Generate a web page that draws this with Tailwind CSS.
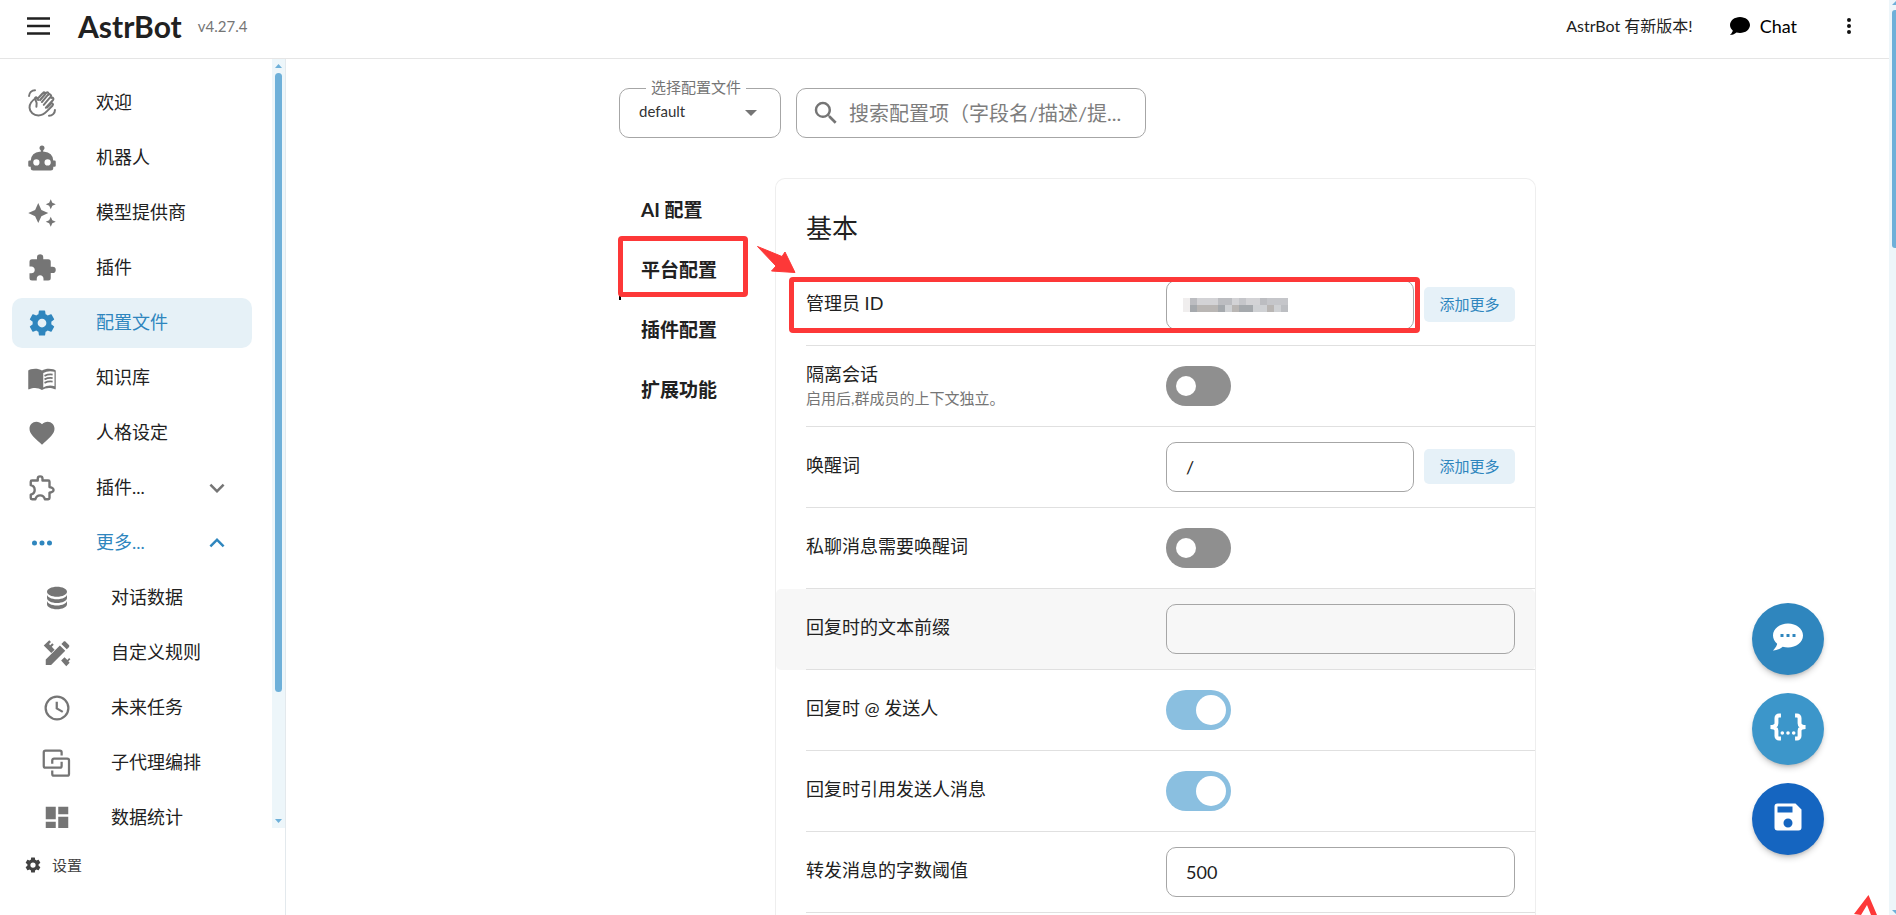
<!DOCTYPE html>
<html lang="zh-CN">
<head>
    <meta charset="UTF-8">
    <meta name="viewport" content="width=device-width, initial-scale=1.0">
    <title>AstrBot</title>
    <script src="https://cdn.jsdelivr.net/npm/@tailwindcss/browser@4"></script>
</head>
<body class="h-screen overflow-hidden bg-white font-['Lato','Noto_Sans_CJK_SC',sans-serif] text-[#212121] flex">
    <!-- icon set -->
    <svg class="hidden">
        <symbol id="i-hand" viewBox="0 0 24 24"><path fill="none" stroke="currentColor" stroke-width="1.700" stroke-linecap="round" stroke-linejoin="round" d="M7.2 15.200l.2-3.200-1.300-3.800c-.3-.9.900-1.500 1.500-.7L8.700 9.500M7.400 7.300c-4 2.600-6.300 5.400-6.100 8.700.2 4 3.600 6.600 7.600 6.700 3.200 0 5.300-1.500 7.400-3.700l4.800-4.900c1-1.200-.4-2.400-1.400-1.500L16.300 16M8.800 7.700l3.600-3.800c1-.9 2.400.3 1.500 1.400l-3.600 4M12.800 3.500c1-1.300 2.700-.2 1.900 1l-4.300 5M14.900 4.200l.8-.9c1.200-1 2.600.3 1.700 1.400l-5.500 6.500M17.600 5c1.200-1.100 2.900.2 1.900 1.600l-6 7M20 7.600c1.300-.7 2.400.7 1.500 1.800L15.300 16M.9 6C1 3.200 3.200 1 6 1M23.100 18c0 2.800-2.300 5-5.100 5"/></symbol>
        <symbol id="i-robot" viewBox="0 0 24 24"><path fill="currentColor" d="M12 2a2 2 0 0 1 2 2c0 .74-.4 1.390-1 1.730V7h1a7 7 0 0 1 7 7h1a1 1 0 0 1 1 1v3a1 1 0 0 1-1 1h-1v1a2 2 0 0 1-2 2H5a2 2 0 0 1-2-2v-1H2a1 1 0 0 1-1-1v-3a1 1 0 0 1 1-1h1a7 7 0 0 1 7-7h1V5.730c-.6-.34-1-.99-1-1.730a2 2 0 0 1 2-2M7.500 13A2.500 2.500 0 0 0 5 15.500 2.500 2.500 0 0 0 7.500 18a2.500 2.500 0 0 0 2.500-2.500A2.500 2.500 0 0 0 7.500 13m9 0a2.500 2.500 0 0 0-2.500 2.500 2.500 2.500 0 0 0 2.500 2.500 2.500 2.500 0 0 0 2.500-2.500 2.500 2.500 0 0 0-2.500-2.500z"/></symbol>
        <symbol id="i-spark" viewBox="0 0 24 24"><path fill="currentColor" d="M9 4l2.500 5.500L17 12l-5.500 2.500L9 20l-2.500-5.500L1 12l5.500-2.500zM19 1l1.250 2.750L23 5l-2.750 1.250L19 9l-1.250-2.750L15 5l2.750-1.250zM19 15l1.250 2.750L23 19l-2.750 1.250L19 23l-1.250-2.750L15 19l2.750-1.250z"/></symbol>
        <symbol id="i-puzzle" viewBox="0 0 24 24"><path fill="currentColor" d="M20.500 11H19V7a2 2 0 0 0-2-2h-4V3.500A2.500 2.500 0 0 0 10.500 1 2.500 2.500 0 0 0 8 3.500V5H4a2 2 0 0 0-2 2v3.800h1.500c1.500 0 2.700 1.200 2.700 2.700S5 16.200 3.500 16.200H2V20a2 2 0 0 0 2 2h3.800v-1.500c0-1.500 1.200-2.700 2.700-2.700s2.700 1.200 2.700 2.700V22H17a2 2 0 0 0 2-2v-4h1.500a2.500 2.500 0 0 0 2.500-2.500 2.500 2.500 0 0 0-2.500-2.500z"/></symbol>
        <symbol id="i-cog" viewBox="0 0 24 24"><path fill="currentColor" d="M12 15.500A3.500 3.500 0 0 1 8.500 12 3.500 3.500 0 0 1 12 8.500a3.500 3.500 0 0 1 3.500 3.500 3.500 3.500 0 0 1-3.500 3.500m7.430-2.530c.04-.32.070-.64.070-.97s-.03-.66-.07-1l2.110-1.630c.19-.15.240-.42.120-.64l-2-3.460c-.12-.22-.39-.31-.61-.22l-2.490 1c-.52-.39-1.060-.73-1.690-.98l-.37-2.650A.506.506 0 0 0 14 2h-4c-.25 0-.46.180-.5.420l-.37 2.650c-.63.250-1.170.590-1.690.980l-2.490-1c-.22-.09-.49 0-.61.220l-2 3.460c-.13.220-.07.490.12.640L4.570 11c-.04.340-.07.670-.07 1s.03.650.070.970l-2.110 1.660c-.19.150-.25.420-.12.640l2 3.460c.12.220.390.300.610.220l2.490-1.010c.52.400 1.060.740 1.690.990l.37 2.650c.04.240.250.420.500.420h4c.25 0 .46-.18.500-.42l.37-2.650c.63-.26 1.170-.59 1.690-.99l2.490 1.010c.22.080.490 0 .61-.22l2-3.460c.12-.22.070-.49-.12-.64z"/></symbol>
        <symbol id="i-book" viewBox="0 0 24 24"><path fill="currentColor" d="M12 21.500c-1.350-.85-3.800-1.500-5.500-1.500-1.650 0-3.350.3-4.750 1.050-.1.050-.15.050-.25.050-.25 0-.5-.25-.5-.5V6c.6-.45 1.250-.75 2-1 1.110-.35 2.330-.5 3.500-.5 1.950 0 4.050.4 5.500 1.500 1.450-1.100 3.550-1.500 5.500-1.500 1.170 0 2.390.15 3.500.5.75.25 1.400.55 2 1v14.600c0 .25-.25.5-.5.5-.1 0-.15 0-.25-.05-1.400-.75-3.100-1.050-4.750-1.050-1.700 0-4.150.65-5.500 1.500M13 8v11.500c1.350-.85 3.800-1.500 5.500-1.500 1.200 0 2.400.15 3.500.5V7c-1.100-.35-2.300-.5-3.500-.5-1.700 0-4.150.65-5.500 1.500z"/><path fill="none" stroke="currentColor" stroke-width="1.400" d="M14 10.300q3.200-1.500 6.500-1M14 13.100q3.200-1.500 6.500-1M14 15.900q3.200-1.500 6.500-1"/></symbol>
        <symbol id="i-heart" viewBox="0 0 24 24"><path fill="currentColor" d="M12 21.350l-1.450-1.320C5.400 15.360 2 12.270 2 8.500 2 5.410 4.420 3 7.500 3c1.740 0 3.410.81 4.500 2.080C13.090 3.810 14.760 3 16.500 3 19.580 3 22 5.410 22 8.500c0 3.770-3.400 6.860-8.550 11.530z"/></symbol>
        <symbol id="i-puzzle-o" viewBox="0 0 24 24"><path fill="none" stroke="currentColor" stroke-width="1.900" stroke-linejoin="round" d="M8.600 6V4.500c0-2.400 3.800-2.400 3.800 0V6H17a1 1 0 0 1 1 1v4.200l1.700.5c2.100.8 2.100 3 0 3.600l-1.700.5V20a1 1 0 0 1-1 1h-2.700c-1-4.200-6.600-4.200-7.600 0H4a1 1 0 0 1-1-1v-2.700c4.200-1 4.200-6.600 0-7.600V7a1 1 0 0 1 1-1z"/></symbol>
        <symbol id="i-dots" viewBox="0 0 24 24"><path fill="currentColor" d="M16 12a2 2 0 0 1 2-2 2 2 0 0 1 2 2 2 2 0 0 1-2 2 2 2 0 0 1-2-2m-6 0a2 2 0 0 1 2-2 2 2 0 0 1 2 2 2 2 0 0 1-2 2 2 2 0 0 1-2-2m-6 0a2 2 0 0 1 2-2 2 2 0 0 1 2 2 2 2 0 0 1-2 2 2 2 0 0 1-2-2z"/></symbol>
        <symbol id="i-db" viewBox="0 0 24 24"><path fill="currentColor" d="M12 3C7.580 3 4 4.790 4 7s3.580 4 8 4 8-1.790 8-4-3.580-4-8-4M4 9v3c0 2.210 3.580 4 8 4s8-1.790 8-4V9c0 2.210-3.580 4-8 4s-8-1.790-8-4m0 5v3c0 2.210 3.580 4 8 4s8-1.790 8-4v-3c0 2.210-3.580 4-8 4s-8-1.790-8-4z"/></symbol>
        <symbol id="i-tools" viewBox="0 0 24 24"><path fill="currentColor" d="M3 21.500v-4.300L14.300 5.900l4.300 4.300L7.300 21.500zM15.500 4.700l1.700-1.700c.5-.5 1.200-.5 1.700 0l2.600 2.600c.5.5.5 1.200 0 1.700l-1.700 1.700zM5.800 1.800l1.400 1.400-1.600 1.600 1 1 1.600-1.600 1.200 1.200-1.600 1.600 2.300 2.300-2.700 2.700-6-6zM15.300 18l2.700-2.700 2.300 2.300 1.400-1.600 1 1-1.600 1.600 1 1.100-2.700 2.800z"/></symbol>
        <symbol id="i-clock" viewBox="0 0 24 24"><path fill="none" stroke="currentColor" stroke-width="1.800" d="M12 2.900a9.100 9.100 0 1 0 0 18.200 9.100 9.100 0 0 0 0-18.200M11.800 7v5.300l4.800 2.800"/></symbol>
        <symbol id="i-group" viewBox="0 0 24 24"><path fill="none" stroke="currentColor" stroke-width="1.800" stroke-linejoin="round" d="M15.700 6V3.500a1.400 1.400 0 0 0-1.400-1.400H2.800a1.400 1.400 0 0 0-1.400 1.400v10.800a1.400 1.400 0 0 0 1.400 1.400h11.500a1.400 1.400 0 0 0 1.400-1.400v-3.300M8.200 12.500V9.900a1.400 1.400 0 0 1 1.400-1.400h10.600a1.400 1.400 0 0 1 1.400 1.400v10.800a1.400 1.400 0 0 1-1.400 1.400H9.600a1.400 1.400 0 0 1-1.400-1.400V18"/></symbol>
        <symbol id="i-board" viewBox="0 0 24 24"><path fill="currentColor" d="M13 3v6h8V3m-8 18h8V11h-8M3 21h8v-6H3m0-2h8V3H3z"/></symbol>
        <symbol id="i-down" viewBox="0 0 24 24"><path fill="currentColor" d="M7.410 8.580L12 13.170l4.590-4.590L18 10l-6 6-6-6z"/></symbol>
        <symbol id="i-up" viewBox="0 0 24 24"><path fill="currentColor" d="M7.410 15.410L12 10.830l4.590 4.580L18 14l-6-6-6 6z"/></symbol>
        <symbol id="i-search" viewBox="0 0 24 24"><path fill="currentColor" d="M9.500 3A6.500 6.500 0 0 1 16 9.500c0 1.610-.59 3.090-1.560 4.230l.27.270h.79l5 5-1.500 1.500-5-5v-.79l-.27-.27A6.516 6.516 0 0 1 9.500 16 6.500 6.500 0 0 1 3 9.500 6.500 6.500 0 0 1 9.500 3m0 2C7 5 5 7 5 9.500S7 14 9.500 14 14 12 14 9.500 12 5 9.500 5z"/></symbol>
        <symbol id="i-chat" viewBox="0 0 24 24"><path fill="currentColor" d="M12 3c5.500 0 10 3.580 10 8s-4.500 8-10 8c-1.240 0-2.430-.18-3.530-.5C5.550 21 2 21 2 21c2.330-2.330 2.700-3.900 2.750-4.500C3.050 15.070 2 13.130 2 11c0-4.420 4.500-8 10-8z"/></symbol>
        <symbol id="i-chat-dots" viewBox="0 0 24 24"><path fill="currentColor" fill-rule="evenodd" d="M12 3c5.500 0 10 3.580 10 8s-4.500 8-10 8c-1.240 0-2.430-.18-3.530-.5C5.550 21 2 21 2 21c2.330-2.330 2.700-3.900 2.750-4.500C3.050 15.070 2 13.130 2 11c0-4.420 4.500-8 10-8M17 12v-2h-2v2zm-4 0v-2h-2v2zm-4 0v-2H7v2z"/></symbol>
        <symbol id="i-json" viewBox="0 0 24 24"><path fill="none" stroke="currentColor" stroke-width="2.600" d="M7.300 4.300H6a1.700 1.700 0 0 0-1.700 1.700v3.500Q4.300 12 .3 12q4 0 4 2.500V18A1.700 1.700 0 0 0 6 19.700h1.300M16.700 4.300H18a1.700 1.700 0 0 1 1.700 1.700v3.500q0 2.500 4 2.500-4 0-4 2.500V18a1.700 1.700 0 0 1-1.700 1.700h-1.300"/><path fill="currentColor" d="M12 14.800a1.200 1.200 0 1 1 0 2.400 1.200 1.200 0 0 1 0-2.400m-3.800 0a1.200 1.200 0 1 1 0 2.400 1.200 1.200 0 0 1 0-2.400m7.600 0a1.200 1.200 0 1 1 0 2.400 1.200 1.200 0 0 1 0-2.400z"/></symbol>
        <symbol id="i-save" viewBox="0 0 24 24"><path fill="currentColor" fill-rule="evenodd" d="M17 3H5a2 2 0 0 0-2 2v14a2 2 0 0 0 2 2h14a2 2 0 0 0 2-2V7zM15 9H5V5h10zM12 13a3 3 0 1 0 0 6 3 3 0 0 0 0-6z"/></symbol>
    </svg>

    <div class="flex min-w-0 flex-1 flex-col">
        <!-- Top bar -->
        <header class="flex h-[59px] shrink-0 items-center border-b border-[#e5e5e5] pr-7 pb-[6px] pl-6">
            <button type="button" aria-label="菜单">
                <svg class="size-7" viewBox="0 0 28 28"><path d="M3 6.500h23M3 14h23M3 21.500h23" stroke="#212121" stroke-width="2.500"/></svg>
            </button>
            <h1 class="ml-[26px] text-3xl font-bold">AstrBot</h1>
            <span class="ml-4 text-[15px] text-[#757575]">v4.27.4</span>
            <div class="ml-auto flex items-center">
                <span class="text-base">AstrBot 有新版本!</span>
                <a href="#" class="ml-[35px] flex items-center gap-2 text-lg text-black"><svg class="size-6"><use href="#i-chat"/></svg>Chat</a>
                <button type="button" aria-label="更多" class="ml-10">
                    <svg class="size-6" viewBox="0 0 24 24"><path fill="#111" d="M12 16a2 2 0 1 1 0 4 2 2 0 0 1 0-4m0-6a2 2 0 1 1 0 4 2 2 0 0 1 0-4m0-6a2 2 0 1 1 0 4 2 2 0 0 1 0-4z"/></svg>
                </button>
            </div>
        </header>

        <div class="flex min-h-0 flex-1">
            <!-- Sidebar -->
            <aside class="flex w-[286px] shrink-0 flex-col border-r border-[#e3e9ed]">
                <div class="flex min-h-0 flex-1">
                    <nav class="flex min-w-0 flex-1 flex-col gap-[5px] overflow-hidden pt-[19px] pr-5 pl-3 text-lg">
                        <a href="#" class="flex h-[50px] shrink-0 items-center gap-10 rounded-[10px] pl-4"><svg class="size-7 text-[#757575]"><use href="#i-hand"/></svg><span class="pb-[3px]">欢迎</span></a>
                        <a href="#" class="flex h-[50px] shrink-0 items-center gap-10 rounded-[10px] pl-4"><svg class="size-[30px] -mx-px text-[#757575]"><use href="#i-robot"/></svg><span class="pb-[3px]">机器人</span></a>
                        <a href="#" class="flex h-[50px] shrink-0 items-center gap-10 rounded-[10px] pl-4"><svg class="size-[30px] -mx-px text-[#757575]"><use href="#i-spark"/></svg><span class="pb-[3px]">模型提供商</span></a>
                        <a href="#" class="flex h-[50px] shrink-0 items-center gap-10 rounded-[10px] pl-4"><svg class="size-[30px] -mx-px text-[#757575]"><use href="#i-puzzle"/></svg><span class="pb-[3px]">插件</span></a>
                        <a href="#" class="flex h-[50px] shrink-0 items-center gap-10 rounded-[10px] bg-[#e6f1f7] pl-4 text-[#2f86be]"><svg class="size-[30px] -mx-px"><use href="#i-cog"/></svg><span class="pb-[3px]">配置文件</span></a>
                        <a href="#" class="flex h-[50px] shrink-0 items-center gap-10 rounded-[10px] pl-4"><svg class="size-[30px] -mx-px text-[#757575]"><use href="#i-book"/></svg><span class="pb-[3px]">知识库</span></a>
                        <a href="#" class="flex h-[50px] shrink-0 items-center gap-10 rounded-[10px] pl-4"><svg class="size-[30px] -mx-px text-[#757575]"><use href="#i-heart"/></svg><span class="pb-[3px]">人格设定</span></a>
                        <button type="button" class="flex h-[50px] shrink-0 items-center gap-10 rounded-[10px] pr-5 pl-4"><svg class="size-[30px] -mx-px text-[#757575]"><use href="#i-puzzle-o"/></svg><span class="pb-[3px]">插件...</span><svg class="ml-auto size-[30px] text-[#757575]"><use href="#i-down"/></svg></button>
                        <button type="button" class="flex h-[50px] shrink-0 items-center gap-10 rounded-[10px] pr-5 pl-4 text-[#2f86be]"><svg class="size-[30px] -mx-px"><use href="#i-dots"/></svg><span class="pb-[3px]">更多...</span><svg class="ml-auto size-[30px]"><use href="#i-up"/></svg></button>
                        <a href="#" class="flex h-[50px] shrink-0 items-center gap-10 rounded-[10px] pl-[31px]"><svg class="size-[30px] -mx-px text-[#757575]"><use href="#i-db"/></svg><span class="pb-[3px]">对话数据</span></a>
                        <a href="#" class="flex h-[50px] shrink-0 items-center gap-10 rounded-[10px] pl-[31px]"><svg class="size-[30px] -mx-px text-[#757575]"><use href="#i-tools"/></svg><span class="pb-[3px]">自定义规则</span></a>
                        <a href="#" class="flex h-[50px] shrink-0 items-center gap-10 rounded-[10px] pl-[31px]"><svg class="size-[30px] -mx-px text-[#757575]"><use href="#i-clock"/></svg><span class="pb-[3px]">未来任务</span></a>
                        <a href="#" class="flex h-[50px] shrink-0 items-center gap-10 rounded-[10px] pl-[31px]"><svg class="size-[30px] -mx-px text-[#757575]"><use href="#i-group"/></svg><span class="pb-[3px]">子代理编排</span></a>
                        <a href="#" class="flex h-[50px] shrink-0 items-center gap-10 rounded-[10px] pl-[31px]"><svg class="size-[30px] -mx-px text-[#757575]"><use href="#i-board"/></svg><span class="pb-[3px]">数据统计</span></a>
                    </nav>
                    <!-- sidebar scrollbar -->
                    <div class="flex w-[13px] flex-col items-center bg-[#edf6fa] py-[5px] text-[#6eb0d9]">
                        <svg class="h-1 w-[7px]" viewBox="0 0 7 4"><path fill="currentColor" d="M0 4L3.500 0 7 4z"/></svg>
                        <div class="mt-[5px] h-[619px] w-[7px] rounded-full bg-[#6eb0d9]"></div>
                        <svg class="mt-auto h-1 w-[7px]" viewBox="0 0 7 4"><path fill="currentColor" d="M0 0L3.500 4 7 0z"/></svg>
                    </div>
                </div>
                <div class="h-[87px] shrink-0 pt-[25px] pl-6">
                    <button type="button" class="flex items-center gap-[10px] text-[15px] leading-6 text-[#424242]"><svg class="size-[18px]"><use href="#i-cog"/></svg>设置</button>
                </div>
            </aside>

            <!-- Config page -->
            <main class="flex min-w-0 flex-1 flex-col overflow-hidden pt-[29px] pr-5">
                <div class="mx-auto w-full max-w-[917px]">
                    <div class="flex gap-[15px]">
                        <div class="relative">
                            <label for="config-file" class="absolute -top-[13px] left-[27px] z-10 bg-white px-[5px] text-[15px] leading-6 text-[#757575]">选择配置文件</label>
                            <select id="config-file" class="h-[50px] w-[162px] appearance-none rounded-[10px] border border-[#a6a6a6] bg-white pb-[3px] pl-[19px] text-[15px] text-[#333]">
                                <option>default</option>
                            </select>
                            <svg class="pointer-events-none absolute top-[22px] right-6 h-[6px] w-3" viewBox="0 0 12 6"><path fill="#757575" d="M0 0h12L6 6z"/></svg>
                        </div>
                        <div class="flex h-[50px] w-[350px] items-center rounded-[10px] border border-[#a6a6a6] pr-3 pl-[14px]">
                            <svg class="size-[30px] shrink-0 text-[#757575]"><use href="#i-search"/></svg>
                            <input type="text" aria-label="搜索配置项" placeholder="搜索配置项（字段名/描述/提..." class="ml-2 min-w-0 flex-1 text-xl outline-none placeholder:text-[#7d7d7d]">
                        </div>
                    </div>

                    <div class="mt-10 flex">
                        <div class="relative flex w-[156px] shrink-0 flex-col items-start pt-[2px] text-[19px] font-bold">
                            <button type="button" class="h-[60px] pl-[22px]">AI 配置</button>
                            <button type="button" class="h-[60px] border-l-2 border-black pl-5">平台配置</button>
                            <button type="button" class="h-[60px] pl-[22px]">插件配置</button>
                            <button type="button" class="h-[60px] pl-[22px]">扩展功能</button>
                            <!-- step marker -->
                            <div class="absolute top-[58px] -left-px h-[61px] w-[130px] rounded-[4px] border-[5px] border-[#fd3838]"></div>
                            <svg class="absolute top-[68px] left-[138px] z-10 h-[27px] w-[39px]" viewBox="0 0 39 27"><path fill="#fd3838" stroke="#fd3838" stroke-linejoin="round" d="M0.500 0.500L25 10.500 28 6 38 26.500 14.500 25 19 20z"/></svg>
                        </div>

                        <section class="relative min-w-0 flex-1 rounded-t-[10px] border border-b-0 border-[#eee] pt-[86px]">
                            <h2 class="absolute top-[29px] left-[30px] text-[26px] leading-10">基本</h2>
                            <div class="absolute top-[98px] left-[13px] z-10 h-[56px] w-[631px] rounded-[4px] border-[5px] border-[#fd3838]"></div>

                            <div class="relative flex h-[81px] items-center pr-5 pb-[2px] pl-[30px] after:absolute after:right-0 after:bottom-0 after:left-[30px] after:h-px after:bg-[#e0e0e0]">
                                <label for="admin-id" class="w-[360px] shrink-0 pb-[3px] text-lg">管理员 ID</label>
                                <div class="relative min-w-0 flex-1">
                                    <input id="admin-id" type="text" class="block h-[50px] w-full rounded-[10px] border border-[#a6a6a6] px-[19px] text-lg">
                                    <svg class="absolute top-[18px] left-[17px] h-[14px] w-[105px]" viewBox="0 0 15 2" preserveAspectRatio="none" shape-rendering="crispEdges">
                                        <path fill="#f0eeee" d="M0 0h1v2H0z"/><path fill="#bcbdc1" d="M1 0h1v1H1zM5 0h2v1H5zM11 0h1v1h-1z"/><path fill="#d3d3d6" d="M2 0h3v1H2zM7 0h1v1H7zM9 0h2v1H9z"/><path fill="#c5c6ca" d="M8 0h1v1H8zM12 0h3v1h-3z"/><path fill="#a5a9ad" d="M1 1h1v1H1zM5 1h1v1H5zM8 1h2v1H8z"/><path fill="#b9b6b4" d="M2 1h3v1H2zM7 1h1v1H7zM12 1h1v1h-1z"/><path fill="#cfd1d4" d="M6 1h1v1H6zM10 1h2v1h-2zM13 1h1v1h-1z"/><path fill="#bcbec2" d="M14 1h1v1h-1z"/>
                                    </svg>
                                </div>
                                <button type="button" class="ml-[10px] h-[35px] w-[91px] rounded-[5px] bg-[#e6f1f8] text-[15px] text-[#2f86be]">添加更多</button>
                            </div>
                            <div class="relative flex h-[81px] items-center pr-5 pb-[2px] pl-[30px] after:absolute after:right-0 after:bottom-0 after:left-[30px] after:h-px after:bg-[#e0e0e0]">
                                <label for="isolate" class="w-[360px] shrink-0 text-lg leading-6">隔离会话<span class="block text-[15px] text-[#757575]">启用后,群成员的上下文独立。</span></label>
                                <input id="isolate" type="checkbox" class="flex h-10 w-[65px] appearance-none items-center rounded-full bg-[#8f8f8f] px-[10px] before:size-5 before:rounded-full before:bg-white checked:justify-end checked:bg-[#8abfe0] checked:px-[5px] checked:before:size-[30px]">
                            </div>
                            <div class="relative flex h-[81px] items-center pr-5 pb-[2px] pl-[30px] after:absolute after:right-0 after:bottom-0 after:left-[30px] after:h-px after:bg-[#e0e0e0]">
                                <label for="wake" class="w-[360px] shrink-0 pb-[3px] text-lg">唤醒词</label>
                                <input id="wake" type="text" value="/" class="h-[50px] min-w-0 flex-1 rounded-[10px] border border-[#a6a6a6] px-[19px] text-lg">
                                <button type="button" class="ml-[10px] h-[35px] w-[91px] rounded-[5px] bg-[#e6f1f8] text-[15px] text-[#2f86be]">添加更多</button>
                            </div>
                            <div class="relative flex h-[81px] items-center pr-5 pb-[2px] pl-[30px] after:absolute after:right-0 after:bottom-0 after:left-[30px] after:h-px after:bg-[#e0e0e0]">
                                <label for="private-wake" class="w-[360px] shrink-0 pb-[3px] text-lg">私聊消息需要唤醒词</label>
                                <input id="private-wake" type="checkbox" class="flex h-10 w-[65px] appearance-none items-center rounded-full bg-[#8f8f8f] px-[10px] before:size-5 before:rounded-full before:bg-white checked:justify-end checked:bg-[#8abfe0] checked:px-[5px] checked:before:size-[30px]">
                            </div>
                            <div class="relative flex h-[81px] items-center rounded-[5px] bg-[#f7f7f7] pr-5 pb-[2px] pl-[30px] after:absolute after:right-0 after:bottom-0 after:left-[30px] after:h-px after:bg-[#e0e0e0]">
                                <label for="prefix" class="w-[360px] shrink-0 pb-[3px] text-lg">回复时的文本前缀</label>
                                <input id="prefix" type="text" class="h-[50px] min-w-0 flex-1 rounded-[10px] border border-[#a6a6a6] px-[19px] text-lg">
                            </div>
                            <div class="relative flex h-[81px] items-center pr-5 pb-[2px] pl-[30px] after:absolute after:right-0 after:bottom-0 after:left-[30px] after:h-px after:bg-[#e0e0e0]">
                                <label for="reply-at" class="w-[360px] shrink-0 pb-[3px] text-lg">回复时 @ 发送人</label>
                                <input id="reply-at" type="checkbox" checked class="flex h-10 w-[65px] appearance-none items-center rounded-full bg-[#8f8f8f] px-[10px] before:size-5 before:rounded-full before:bg-white checked:justify-end checked:bg-[#8abfe0] checked:px-[5px] checked:before:size-[30px]">
                            </div>
                            <div class="relative flex h-[81px] items-center pr-5 pb-[2px] pl-[30px] after:absolute after:right-0 after:bottom-0 after:left-[30px] after:h-px after:bg-[#e0e0e0]">
                                <label for="reply-quote" class="w-[360px] shrink-0 pb-[3px] text-lg">回复时引用发送人消息</label>
                                <input id="reply-quote" type="checkbox" checked class="flex h-10 w-[65px] appearance-none items-center rounded-full bg-[#8f8f8f] px-[10px] before:size-5 before:rounded-full before:bg-white checked:justify-end checked:bg-[#8abfe0] checked:px-[5px] checked:before:size-[30px]">
                            </div>
                            <div class="relative flex h-[81px] items-center pr-5 pb-[2px] pl-[30px] after:absolute after:right-0 after:bottom-0 after:left-[30px] after:h-px after:bg-[#e0e0e0]">
                                <label for="forward" class="w-[360px] shrink-0 pb-[3px] text-lg">转发消息的字数阈值</label>
                                <input id="forward" type="text" value="500" class="h-[50px] min-w-0 flex-1 rounded-[10px] border border-[#a6a6a6] px-[19px] text-lg">
                            </div>
                            <div class="h-20"></div>
                        </section>
                    </div>
                </div>
            </main>
        </div>
    </div>

    <!-- page scrollbar -->
    <div class="flex w-[7px] shrink-0 flex-col bg-[#edf6fa] pt-px pl-[3px]">
        <svg class="h-1 w-1" viewBox="0 0 4 4"><path fill="#6eb0d9" d="M0 4L4 0v4z"/></svg>
        <div class="mt-[5px] h-[238px] rounded-l-[3px] bg-[#6eb0d9]"></div>
        <svg class="mt-auto h-[5px] w-1" viewBox="0 0 4 5"><path fill="#6eb0d9" d="M0 0h4v4z"/></svg>
    </div>

    <!-- floating actions -->
    <div class="fixed right-[72px] bottom-[60px] flex flex-col gap-[18px] text-white">
        <button type="button" aria-label="对话" class="flex size-[72px] items-center justify-center rounded-full bg-[#2f86be] pb-1 shadow-md shadow-black/20"><svg class="size-9"><use href="#i-chat-dots"/></svg></button>
        <button type="button" aria-label="代码编辑" class="flex size-[72px] items-center justify-center rounded-full bg-[#3c96ca] pb-1 shadow-md shadow-black/20"><svg class="size-9"><use href="#i-json"/></svg></button>
        <button type="button" aria-label="保存" class="flex size-[72px] items-center justify-center rounded-full bg-[#1565c0] pb-1 shadow-md shadow-black/20"><svg class="size-9"><use href="#i-save"/></svg></button>
    </div>
    <svg class="fixed right-[19px] bottom-0 h-5 w-[23px]" viewBox="0 0 23 20"><path fill="#fd3838" d="M0 19L14.500 0 23 20h-6L13 10 7 20z"/></svg>
</body>
</html>
